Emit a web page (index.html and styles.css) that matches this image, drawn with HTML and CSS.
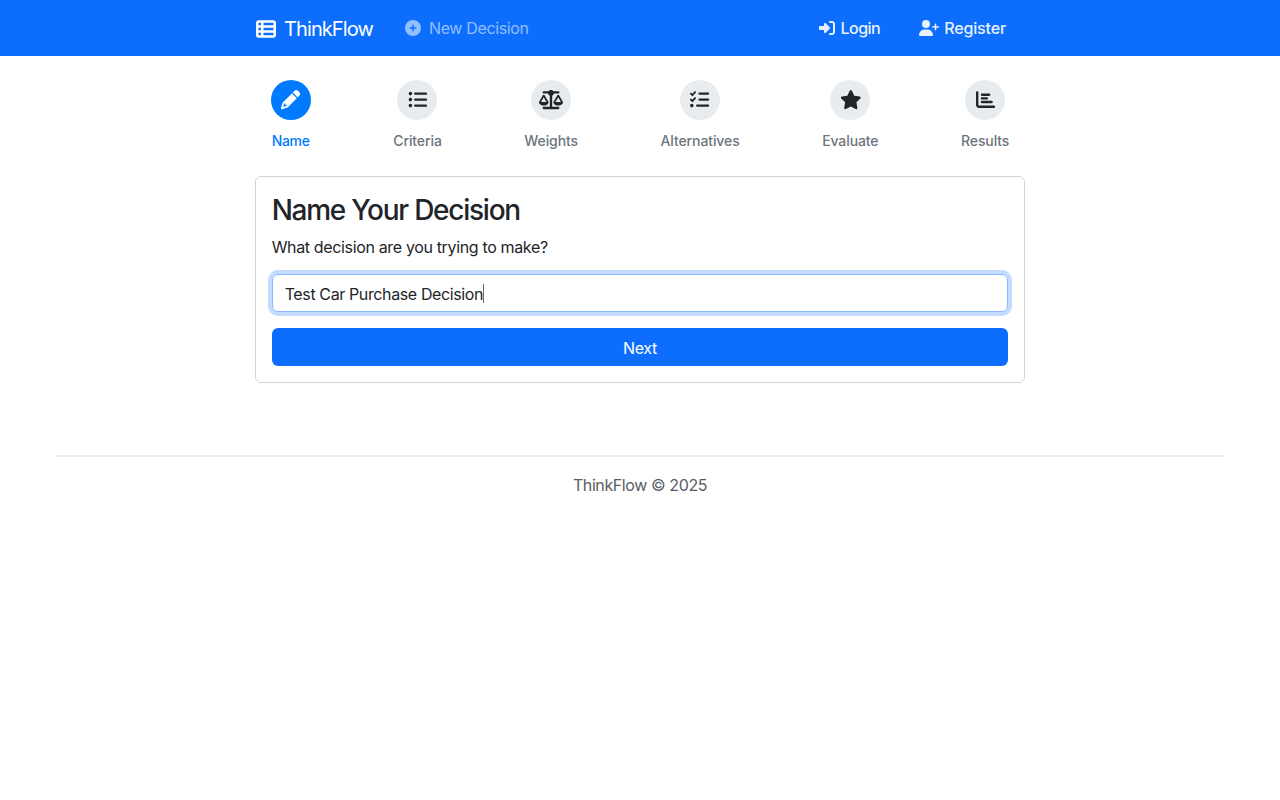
FILE: index.html
```html
<!DOCTYPE html>
<html lang="en">
<head>
<meta charset="utf-8">
<title>ThinkFlow</title>
<link rel="stylesheet" href="styles.css">
</head>
<body>
<header class="navbar">
  <nav class="nav-inner">
    <a class="brand"><svg class="icon" viewBox="0 0 512 512"><path d="M0 96C0 60.7 28.7 32 64 32H448c35.300 0 64 28.700 64 64V416c0 35.300-28.700 64-64 64H64c-35.300 0-64-28.700-64-64V96zm64 0v64h64V96H64zm384 0H192v64H448V96zM64 224v64h64V224H64zm384 0H192v64H448V224zM64 352v64h64V352H64zm384 0H192v64H448V352z"/></svg><span>ThinkFlow</span></a>
    <a class="new-decision"><svg class="icon" viewBox="0 0 512 512"><path d="M256 512A256 256 0 1 0 256 0a256 256 0 1 0 0 512zM232 344V280H168c-13.300 0-24-10.700-24-24s10.700-24 24-24h64V168c0-13.300 10.700-24 24-24s24 10.700 24 24v64h64c13.300 0 24 10.700 24 24s-10.700 24-24 24H280v64c0 13.300-10.700 24-24 24s-24-10.700-24-24z"/></svg><span>New Decision</span></a>
    <div class="account">
      <a class="login"><svg class="icon" viewBox="0 0 512 512"><path d="M217.900 105.900L340.700 228.700c7.200 7.200 11.300 17.100 11.300 27.300s-4.100 20.100-11.300 27.300L217.900 406.100c-6.400 6.400-15 9.900-24 9.900c-18.700 0-33.900-15.200-33.900-33.900l0-62.100L32 320c-17.700 0-32-14.300-32-32l0-64c0-17.700 14.300-32 32-32l128 0 0-62.100c0-18.700 15.200-33.900 33.900-33.900c9 0 17.600 3.600 24 9.900zM352 416l64 0c17.700 0 32-14.300 32-32l0-256c0-17.700-14.300-32-32-32l-64 0c-17.700 0-32-14.300-32-32s14.300-32 32-32l64 0c53 0 96 43 96 96l0 256c0 53-43 96-96 96l-64 0c-17.700 0-32-14.300-32-32s14.300-32 32-32z"/></svg><span>Login</span></a>
      <a class="register"><svg class="icon" viewBox="0 0 640 512"><path d="M96 128a128 128 0 1 1 256 0A128 128 0 1 1 96 128zM0 482.300C0 383.800 79.800 304 178.300 304h91.400C368.200 304 448 383.800 448 482.300c0 16.400-13.300 29.700-29.700 29.700H29.700C13.300 512 0 498.700 0 482.300zM504 312V248H440c-13.300 0-24-10.700-24-24s10.700-24 24-24h64V136c0-13.300 10.700-24 24-24s24 10.700 24 24v64h64c13.300 0 24 10.700 24 24s-10.700 24-24 24H552v64c0 13.300-10.700 24-24 24s-24-10.700-24-24z"/></svg><span>Register</span></a>
    </div>
  </nav>
</header>
<main class="content">
  <ol class="steps">
    <li class="step active"><span class="circle"><svg class="icon" viewBox="0 0 512 512"><path d="M410.300 231l11.300-11.300-33.900-33.900-62.100-62.100L291.700 89.800l-11.300 11.300-22.600 22.600L58.600 322.900c-10.400 10.400-18 23.300-22.200 37.400L1 480.700c-2.500 8.400-.2 17.500 6.100 23.700s15.300 8.500 23.700 6.100l120.300-35.400c14.100-4.200 27-11.800 37.400-22.200L387.700 253.700 410.300 231zM160 399.400l-9.100 22.700c-4 3.100-8.500 5.400-13.300 6.900L59.400 452l23-78.100c1.400-4.900 3.800-9.400 6.900-13.300l22.700-9.100v32c0 8.800 7.200 16 16 16h32zM362.700 18.700L348.300 33.200 325.700 55.800 314.300 67.100l33.900 33.900 62.100 62.100 33.900 33.900 11.300-11.300 22.600-22.600 14.500-14.500c25-25 25-65.500 0-90.500L453.300 18.700c-25-25-65.500-25-90.500 0z"/></svg></span><span class="label">Name</span></li>
    <li class="step"><span class="circle"><svg class="icon" viewBox="0 0 512 512"><path d="M64 144a48 48 0 1 0 0-96 48 48 0 1 0 0 96zM192 64c-17.700 0-32 14.300-32 32s14.300 32 32 32H480c17.700 0 32-14.300 32-32s-14.300-32-32-32H192zm0 160c-17.700 0-32 14.300-32 32s14.300 32 32 32H480c17.700 0 32-14.300 32-32s-14.300-32-32-32H192zm0 160c-17.700 0-32 14.300-32 32s14.300 32 32 32H480c17.700 0 32-14.300 32-32s-14.300-32-32-32H192zM64 464a48 48 0 1 0 0-96 48 48 0 1 0 0 96zm48-208a48 48 0 1 0-96 0 48 48 0 1 0 96 0z"/></svg></span><span class="label">Criteria</span></li>
    <li class="step"><span class="circle"><svg class="icon" viewBox="0 0 640 512"><path d="M384 32H512c17.700 0 32 14.300 32 32s-14.300 32-32 32H398.400c-5.200 25.800-22.900 47.100-46.400 57.300V448H512c17.700 0 32 14.300 32 32s-14.300 32-32 32H128c-17.700 0-32-14.300-32-32s14.300-32 32-32H288V153.300c-23.500-10.300-41.200-31.600-46.400-57.300H128c-17.700 0-32-14.300-32-32s14.300-32 32-32H256c14.600-19.400 37.800-32 64-32s49.400 12.600 64 32zm55.600 288H584.400L512 195.800 439.600 320zM512 416c-62.900 0-115.200-34-126-78.900c-2.600-11 1-22.300 6.700-32.100l95.200-163.200c5-8.600 14.200-13.800 24.100-13.800s19.100 5.300 24.100 13.800l95.200 163.200c5.700 9.800 9.300 21.100 6.700 32.100C627.200 382 574.900 416 512 416zM126.800 195.800L54.400 320H199.300L126.800 195.800zM.9 337.100c-2.600-11 1-22.300 6.700-32.100l95.200-163.200c5-8.600 14.200-13.800 24.100-13.800s19.100 5.300 24.100 13.800l95.200 163.200c5.700 9.800 9.300 21.100 6.700 32.100C242 382 189.700 416 126.800 416S11.700 382 .9 337.100z"/></svg></span><span class="label">Weights</span></li>
    <li class="step"><span class="circle"><svg class="icon" viewBox="0 0 512 512"><path d="M152.100 38.200c9.900 8.900 10.700 24 1.800 33.900l-72 80c-4.400 4.900-10.600 7.800-17.200 7.900s-12.900-2.400-17.600-7L7 113C-2.300 103.600-2.300 88.400 7 79s24.600-9.400 33.900 0l22.100 22.100 55.100-61.200c8.900-9.900 24-10.700 33.900-1.800zm0 160c9.900 8.900 10.700 24 1.800 33.900l-72 80c-4.400 4.900-10.600 7.800-17.200 7.900s-12.900-2.400-17.600-7L7 273c-9.400-9.400-9.400-24.600 0-33.900s24.600-9.400 33.900 0l22.100 22.100 55.100-61.200c8.900-9.900 24-10.700 33.900-1.800zM224 96c0-17.700 14.300-32 32-32H480c17.700 0 32 14.300 32 32s-14.300 32-32 32H256c-17.700 0-32-14.300-32-32zm0 160c0-17.700 14.300-32 32-32H480c17.700 0 32 14.300 32 32s-14.300 32-32 32H256c-17.700 0-32-14.300-32-32zM160 416c0-17.700 14.300-32 32-32H480c17.700 0 32 14.300 32 32s-14.300 32-32 32H192c-17.700 0-32-14.300-32-32zM48 368a48 48 0 1 1 0 96 48 48 0 1 1 0-96z"/></svg></span><span class="label">Alternatives</span></li>
    <li class="step"><span class="circle"><svg class="icon" viewBox="0 0 576 512"><path d="M316.900 18C311.600 7 300.400 0 288.100 0s-23.400 7-28.800 18L195 150.300 51.400 171.500c-12 1.800-22 10.200-25.700 21.700s-.7 24.200 7.900 32.700L137.800 329 113.200 474.700c-2 12 3 24.200 12.900 31.300s23 8 33.800 2.300l128.300-68.500 128.300 68.500c10.800 5.700 23.900 4.900 33.800-2.300s14.900-19.300 12.900-31.300L438.500 329 542.700 225.900c8.600-8.500 11.700-21.200 7.900-32.700s-13.700-19.900-25.700-21.700L381.200 150.300 316.900 18z"/></svg></span><span class="label">Evaluate</span></li>
    <li class="step"><span class="circle"><svg class="icon" viewBox="0 0 512 512"><path d="M32 32c17.700 0 32 14.300 32 32V400c0 8.800 7.200 16 16 16H480c17.700 0 32 14.300 32 32s-14.300 32-32 32H80c-44.200 0-80-35.800-80-80V64C0 46.300 14.300 32 32 32zm96 96c0-17.700 14.300-32 32-32H352c17.700 0 32 14.300 32 32s-14.300 32-32 32H160c-17.700 0-32-14.300-32-32zm32 64H288c17.700 0 32 14.300 32 32s-14.300 32-32 32H160c-17.700 0-32-14.300-32-32s14.300-32 32-32zm0 96H416c17.700 0 32 14.300 32 32s-14.300 32-32 32H160c-17.700 0-32-14.300-32-32s14.300-32 32-32z"/></svg></span><span class="label">Results</span></li>
  </ol>
  <form class="card">
    <h3 class="title">Name Your Decision</h3>
    <p class="prompt"><span>What decision are you trying to make?</span></p>
    <div class="field"><span>Test Car Purchase Decision</span><i class="caret"></i></div>
    <button class="next" type="button"><span>Next</span></button>
  </form>
</main>
<footer class="footer"><span>ThinkFlow © 2025</span></footer>
</body>
</html>
```

FILE: styles.css
```css
* { box-sizing: border-box; }
body {
  margin: 0;
  background: #fff;
  color: #212529;
  font: 400 16px/24px Inter, "Liberation Sans", sans-serif;
  letter-spacing: -0.35px;
}
.icon { display: block; height: 1em; fill: currentColor; flex: none; }
.navbar { height: 56px; background: #0d6efd; color: #fff; }
.nav-inner {
  display: flex;
  align-items: center;
  width: 768px;
  height: 56px;
  margin: 0 auto;
}
.nav-inner a { display: flex; align-items: center; }
.brand { gap: 8px; font-size: 20px; letter-spacing: -0.9px; padding-top: 1px; }
.new-decision { gap: 8px; margin-left: 32px; color: #92bffe; }
.account {
  display: flex;
  gap: 39px;
  margin-left: auto;
  padding-right: 18px;
  color: #e7f1ff;
  font-weight: 500;
}
.account a { gap: 5px; }
.login { letter-spacing: -0.5px; }
.register { letter-spacing: -0.15px; }
.content { width: 770.66px; margin: 0 auto; }
.steps {
  display: flex;
  justify-content: space-between;
  margin: 0;
  padding: 24px 16px 0;
  list-style: none;
}
.step {
  display: flex;
  flex-direction: column;
  align-items: center;
  gap: 10px;
  color: #6c757d;
  font-size: 14px;
  line-height: 22px;
  font-weight: 500;
  letter-spacing: -0.1px;
}
.circle {
  display: grid;
  place-items: center;
  width: 40px;
  height: 40px;
  border-radius: 50%;
  background: #e9ecef;
  color: #212529;
  font-size: 19.2px;
}
.active { color: #007bff; letter-spacing: -0.3px; }
.active .circle { background: #007bff; color: #fff; }
.card {
  margin-top: 24px;
  padding: 17px 16px 16px;
  border: 1px solid #d3d4d5;
  border-radius: 6px;
}
.title { margin: 0 0 7px; font-size: 28px; line-height: 33.6px; font-weight: 500; letter-spacing: -1.25px; }
.prompt { margin: 0 0 15px; }
.field {
  display: flex;
  align-items: center;
  height: 38px;
  padding: 2px 12px 0;
  border: 1px solid #86b7fe;
  border-radius: 6px;
  box-shadow: 0 0 0 4px #c2dbfe;
}
.field span { letter-spacing: -0.38px; }
.caret { width: 1px; height: 19px; background: #6b6e71; }
.next {
  display: block;
  width: 100%;
  height: 38px;
  margin-top: 16px;
  padding: 2px 0 0;
  border: 0;
  border-radius: 6px;
  background: #0d6efd;
  color: #fff;
  font: inherit;
  letter-spacing: inherit;
}
.footer {
  margin: 72px 56px 0;
  padding-top: 16px;
  border-top: 2px solid #ebecf0;
  color: #595c5f;
  text-align: center;
  letter-spacing: -0.4px;
}
```
